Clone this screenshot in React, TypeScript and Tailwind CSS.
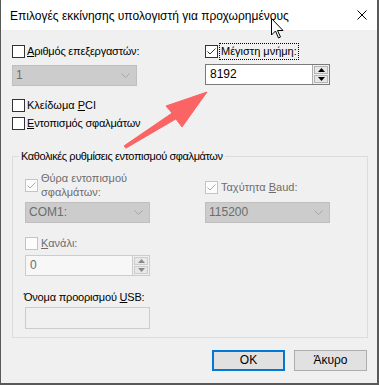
import React from "react";

function CheckMark({ color }: { color: string }) {
  return (
    <svg width="11" height="11" viewBox="0 0 11 11" className="block">
      <path d="M1.5 5.5 L4 8 L9.5 2.5" fill="none" stroke={color} strokeWidth="1" />
    </svg>
  );
}

function CheckBox({ checked, disabled }: { checked?: boolean; disabled?: boolean }) {
  return (
    <span
      className={
        disabled
          ? "flex items-center justify-center w-[13px] h-[13px] shrink-0 border border-[#c4c4c4] bg-[#fcfcfc]"
          : "flex items-center justify-center w-[13px] h-[13px] shrink-0 border border-[#333333] bg-white"
      }
    >
      {checked && <CheckMark color={disabled ? "#a8a8a8" : "#333333"} />}
    </span>
  );
}

function Chevron() {
  return (
    <svg width="9" height="5" viewBox="0 0 9 5" className="block">
      <path d="M0.5 0.5 L4.5 4.5 L8.5 0.5" fill="none" stroke="#a6a6a6" strokeWidth="1" />
    </svg>
  );
}

function Combo({ value }: { value: string }) {
  return (
    <div className="flex items-center justify-between w-[125px] h-[21px] border border-[#bfbfbf] bg-[#cccccc] pl-[3px] pr-[6px] text-[#6d6d6d] text-[12px]">
      <span>{value}</span>
      <Chevron />
    </div>
  );
}

function Tri({ up, color }: { up?: boolean; color: string }) {
  return (
    <svg width="7" height="4" viewBox="0 0 7 4" className="block">
      {up ? <path d="M0 4 L3.5 0 L7 4 Z" fill={color} /> : <path d="M0 0 L7 0 L3.5 4 Z" fill={color} />}
    </svg>
  );
}

function Spin({ value, disabled }: { value: string; disabled?: boolean }) {
  return (
    <div
      className={
        disabled
          ? "flex w-[125px] h-[21px] border border-[#cccccc] bg-[#f7f7f7] text-[#6d6d6d] text-[12px]"
          : "flex w-[125px] h-[21px] border border-[#7a7a7a] bg-white text-black text-[12px]"
      }
    >
      <div className="flex-1 flex items-center pl-[4px]">{value}</div>
      <div
        className={
          disabled
            ? "flex flex-col w-[17px] gap-[1px] p-[1px] bg-[#f0f0f0] border-l border-[#cccccc]"
            : "flex flex-col w-[17px] gap-[1px] p-[1px] bg-[#f0f0f0] border-l border-[#adadad]"
        }
      >
        <div
          className={
            disabled
              ? "flex-1 flex items-center justify-center border border-[#cccccc] bg-[#e8e8e8]"
              : "flex-1 flex items-center justify-center border border-[#b5b5b5] bg-[#e6e6e6]"
          }
        >
          <Tri up color={disabled ? "#8a8a8a" : "#000000"} />
        </div>
        <div
          className={
            disabled
              ? "flex-1 flex items-center justify-center border border-[#cccccc] bg-[#e8e8e8]"
              : "flex-1 flex items-center justify-center border border-[#b5b5b5] bg-[#e6e6e6]"
          }
        >
          <Tri color={disabled ? "#8a8a8a" : "#000000"} />
        </div>
      </div>
    </div>
  );
}

export default function App() {
  return (
    <div className="relative w-[379px] h-[385px] flex flex-col border-l border-r-2 border-b-2 border-[#595959] bg-[#f0f0f0] font-['Liberation_Sans',Arial,sans-serif] text-[12px] leading-[15px] text-black overflow-hidden">
      {/* Title bar */}
      <div className="flex items-center justify-between h-[30px] shrink-0 bg-white pl-[9px] pr-[10px]">
        <span className="pt-[2px]">Επιλογές εκκίνησης υπολογιστή για προχωρημένους</span>
        <svg width="10" height="10" viewBox="0 0 10 10" className="block">
          <path d="M0.5 0.5 L9.5 9.5 M9.5 0.5 L0.5 9.5" stroke="#000" strokeWidth="1" />
        </svg>
      </div>

      {/* Body */}
      <div className="flex-1 flex flex-col pl-[11px] pr-[8px] text-[11px]">
        <div className="grid grid-cols-[193px_1fr]">
          <div className="flex flex-col items-start pt-[14px]">
            <div className="flex items-center gap-[2px] h-[15px]">
              <CheckBox />
              <span className="tracking-[-0.2px]">
                <u>Α</u>ριθμός επεξεργαστών:
              </span>
            </div>
            <div className="mt-[6px]">
              <Combo value="1" />
            </div>
            <div className="flex items-center gap-[2px] h-[15px] mt-[12px]">
              <CheckBox />
              <span>
                Κλείδωμα <u>P</u>CI
              </span>
            </div>
            <div className="flex items-center gap-[2px] h-[15px] mt-[3px]">
              <CheckBox />
              <span className="tracking-[-0.2px]">
                <u>Ε</u>ντοπισμός σφαλμάτων
              </span>
            </div>
          </div>
          <div className="flex flex-col items-start pt-[13px]">
            <div className="flex items-center gap-[1px] h-[17px]">
              <CheckBox checked />
              <span className="border border-dotted border-black px-[1px] leading-[15px]">Μέγιστη μνήμη:</span>
            </div>
            <div className="mt-[4px]">
              <Spin value="8192" />
            </div>
          </div>
        </div>

        <fieldset className="mt-[18px] mr-[1px] border border-[#dcdcdc] pl-[12px] pb-[8px] min-w-0">
          <legend className="ml-[-6px] px-[2px] leading-[15px] tracking-[-0.4px]">Καθολικές ρυθμίσεις εντοπισμού σφαλμάτων</legend>
          <div className="grid grid-cols-[180px_1fr] mt-[7px]">
            <div className="flex items-center gap-[3px] h-[28px]">
              <CheckBox checked disabled />
              <span className="w-[100px] leading-[14px] text-[#6d6d6d]">Θύρα εντοπισμού σφαλμάτων:</span>
            </div>
            <div className="flex items-center gap-[3px] h-[28px] pt-[4px]">
              <CheckBox checked disabled />
              <span className="text-[#6d6d6d]">
                Ταχύτητα <u>B</u>aud:
              </span>
            </div>
            <div className="mt-[3px]">
              <Combo value="COM1:" />
            </div>
            <div className="mt-[3px]">
              <Combo value="115200" />
            </div>
          </div>
          <div className="flex items-center gap-[3px] h-[16px] mt-[12px]">
            <CheckBox disabled />
            <span className="text-[#6d6d6d]">
              <u>Κ</u>ανάλι:
            </span>
          </div>
          <div className="mt-[4px]">
            <Spin value="0" disabled />
          </div>
          <div className="mt-[14px] ml-[-1px] h-[15px] tracking-[-0.2px]">
            Όνομα προορισμού <u>U</u>SB:
          </div>
          <div className="mt-[2px] w-[125px] h-[22px] border border-[#cccccc] bg-[#f0f0f0]" />
        </fieldset>

        <div className="flex justify-end gap-[9px] mt-[12px] mr-[2px] text-[12px]">
          <button className="w-[73px] h-[21px] border-2 border-[#0078d7] bg-[#e1e1e1] leading-[15px]">OK</button>
          <button className="w-[73px] h-[21px] border border-[#adadad] bg-[#e1e1e1] leading-[15px]">Άκυρο</button>
        </div>
      </div>

      {/* Red annotation arrow */}
      <svg className="absolute left-[-1px] top-0 pointer-events-none" width="379" height="385" viewBox="0 0 379 385">
        <path
          d="M124.2 145.8 L172.1 113.1 L166 106 L207 92 L182 127 L175.9 118.9 L125.8 148.2 Z"
          fill="#fb6464"
          stroke="#fb6464"
          strokeWidth="1"
          strokeLinejoin="round"
        />
      </svg>

      {/* Mouse cursor */}
      <svg className="absolute left-[270px] top-[18px] pointer-events-none" width="14" height="22" viewBox="0 0 14 22">
        <path
          d="M0.5 0.5 L0.5 17 L4.5 13 L7.5 20 L9.5 19 L6.5 12.5 L12 12.5 Z"
          fill="#ffffff"
          stroke="#000000"
          strokeWidth="1"
          strokeLinejoin="miter"
        />
      </svg>
    </div>
  );
}
